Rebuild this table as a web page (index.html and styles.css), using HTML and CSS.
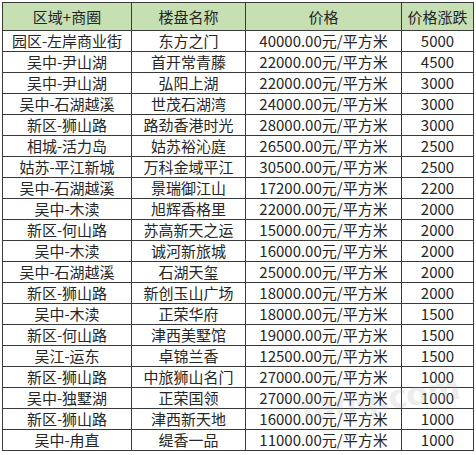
FILE: index.html
```html
<!DOCTYPE html>
<html lang="zh">
<head>
<meta charset="utf-8">
<link rel="stylesheet" href="styles.css">
</head>
<body>
<div class="wrap">
<table class="grid">
<colgroup><col class="c1"><col class="c2"><col class="c3"><col class="c4"></colgroup>
<thead>
<tr><th>区域+商圈</th><th>楼盘名称</th><th>价格</th><th>价格涨跌</th></tr>
</thead>
<tbody>
<tr><td>园区-左岸商业街</td><td>东方之门</td><td>40000.00元/平方米</td><td>5000</td></tr>
<tr><td>吴中-尹山湖</td><td>首开常青藤</td><td>22000.00元/平方米</td><td>4500</td></tr>
<tr><td>吴中-尹山湖</td><td>弘阳上湖</td><td>22000.00元/平方米</td><td>3000</td></tr>
<tr><td>吴中-石湖越溪</td><td>世茂石湖湾</td><td>24000.00元/平方米</td><td>3000</td></tr>
<tr><td>新区-狮山路</td><td>路劲香港时光</td><td>28000.00元/平方米</td><td>3000</td></tr>
<tr><td>相城-活力岛</td><td>姑苏裕沁庭</td><td>26500.00元/平方米</td><td>2500</td></tr>
<tr><td>姑苏-平江新城</td><td>万科金域平江</td><td>30500.00元/平方米</td><td>2500</td></tr>
<tr><td>吴中-石湖越溪</td><td>景瑞御江山</td><td>17200.00元/平方米</td><td>2200</td></tr>
<tr><td>吴中-木渎</td><td>旭辉香格里</td><td>22000.00元/平方米</td><td>2000</td></tr>
<tr><td>新区-何山路</td><td>苏高新天之运</td><td>15000.00元/平方米</td><td>2000</td></tr>
<tr><td>吴中-木渎</td><td>诚河新旅城</td><td>16000.00元/平方米</td><td>2000</td></tr>
<tr><td>吴中-石湖越溪</td><td>石湖天玺</td><td>25000.00元/平方米</td><td>2000</td></tr>
<tr><td>新区-狮山路</td><td>新创玉山广场</td><td>18000.00元/平方米</td><td>2000</td></tr>
<tr><td>吴中-木渎</td><td>正荣华府</td><td>18000.00元/平方米</td><td>1500</td></tr>
<tr><td>新区-何山路</td><td>津西美墅馆</td><td>19000.00元/平方米</td><td>1500</td></tr>
<tr><td>吴江-运东</td><td>卓锦兰香</td><td>12500.00元/平方米</td><td>1500</td></tr>
<tr><td>新区-狮山路</td><td>中旅狮山名门</td><td>27000.00元/平方米</td><td>1000</td></tr>
<tr><td>吴中-独墅湖</td><td>正荣国领</td><td>27000.00元/平方米</td><td>1000</td></tr>
<tr><td>新区-狮山路</td><td>津西新天地</td><td>16000.00元/平方米</td><td>1000</td></tr>
<tr><td>吴中-甪直</td><td>缇香一品</td><td>11000.00元/平方米</td><td>1000</td></tr>
</tbody>
</table>
<div class="watermark">fang.com</div>
</div>
</body>
</html>
```
FILE: styles.css
```css
html, body {
  margin: 0;
  padding: 0;
  background: #ffffff;
}
.wrap {
  position: relative;
  width: 476px;
  height: 455px;
  padding: 2px 0 0 2px;
  box-sizing: border-box;
  overflow: hidden;
}
.grid {
  border-collapse: collapse;
  table-layout: fixed;
  width: 472px;
  font-family: "Noto Sans CJK SC", "Noto Sans", sans-serif;
  font-size: 15px;
  color: #262626;
}
.c1 { width: 129px; }
.c2 { width: 114px; }
.c3 { width: 156px; }
.c4 { width: 72px; }
.grid th, .grid td {
  border: 1px solid #3a3a3a;
  text-align: center;
  padding: 0;
  line-height: 20px;
  white-space: nowrap;
}
.grid th {
  background: #c6dfb3;
  font-weight: normal;
  height: 27px;
}
.grid td {
  height: 20px;
}
.watermark {
  position: absolute;
  left: 300px;
  top: 380px;
  font-family: "DejaVu Sans", sans-serif;
  font-weight: bold;
  font-size: 32px;
  letter-spacing: -1px;
  color: rgba(160, 160, 160, 0.2);
  transform: rotate(-8deg);
  pointer-events: none;
}
```
